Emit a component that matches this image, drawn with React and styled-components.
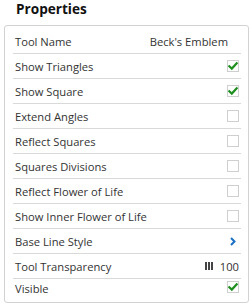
import React from "react";
import styled, { createGlobalStyle } from "styled-components";

const GlobalStyle = createGlobalStyle`
  body {
    margin: 0;
    background: #ffffff;
    font-family: "Open Sans", "Liberation Sans", sans-serif;
    color: #333333;
  }
`;

const rows = [
  { label: "Tool Name", type: "text", value: "Beck's Emblem" },
  { label: "Show Triangles", type: "check", value: true },
  { label: "Show Square", type: "check", value: true },
  { label: "Extend Angles", type: "check", value: false },
  { label: "Reflect Squares", type: "check", value: false },
  { label: "Squares Divisions", type: "check", value: false },
  { label: "Reflect Flower of Life", type: "check", value: false },
  { label: "Show Inner Flower of Life", type: "check", value: false },
  { label: "Base Line Style", type: "link" },
  { label: "Tool Transparency", type: "slider", value: 100 },
  { label: "Visible", type: "check", value: true },
];

const Check = ({ on }) => (
  <Box>
    {on && (
      <svg width="10" height="10" viewBox="0 0 10 10">
        <path
          d="M1.3 5.2 L3.8 7.6 L8.7 2.3"
          fill="none"
          stroke="#1f8f1f"
          strokeWidth="2.2"
          strokeLinecap="square"
        />
      </svg>
    )}
  </Box>
);

const Chevron = () => (
  <svg width="6" height="9" viewBox="0 0 6 9">
    <path d="M1 1 L4.5 4.5 L1 8" fill="none" stroke="#1a6fc4" strokeWidth="2" />
  </svg>
);

const App = () => {
  return (
    <Page>
      <GlobalStyle />
      <Title>Properties</Title>
      <Card>
        {rows.map((r) => (
          <Row key={r.label}>
            <Label>{r.label}</Label>
            {r.type === "text" && <Value $inset>{r.value}</Value>}
            {r.type === "check" && <Check on={r.value} />}
            {r.type === "link" && (
              <Arrow>
                <Chevron />
              </Arrow>
            )}
            {r.type === "slider" && (
              <Slider>
                <Bars>
                  <i />
                  <i />
                  <i />
                </Bars>
                <Value>{r.value}</Value>
              </Slider>
            )}
          </Row>
        ))}
      </Card>
    </Page>
  );
};

export default App;

const Page = styled.div`
  width: 252px;
  height: 308px;
  overflow: hidden;
`;

const Title = styled.h1`
  margin: 0;
  padding: 0 0 0 16px;
  height: 25px;
  font-size: 13.6px;
  line-height: 17px;
  font-weight: 700;
  color: #111111;
`;

const Card = styled.div`
  margin-left: 4px;
  width: 245px;
  box-sizing: border-box;
  border: 1px solid #d2d2d2;
  border-radius: 3px;
  padding: 3px 7px 0 8px;
  background: #ffffff;
`;

const Row = styled.div`
  display: flex;
  align-items: center;
  justify-content: space-between;
  height: 24px;
  border-bottom: 1px solid #d9d9d9;
  padding: 0 2px 0 2px;
  font-size: 11.2px;

  &:last-child {
    border-bottom: none;
    height: 21px;
    align-items: flex-start;
    padding-top: 2px;
  }
`;

const Label = styled.span`
  color: #333333;
  white-space: nowrap;
`;

const Value = styled.span`
  color: #333333;
  padding-right: ${(p) => (p.$inset ? "11px" : "0")};
`;

const Box = styled.span`
  display: flex;
  align-items: center;
  justify-content: center;
  width: 12px;
  height: 12px;
  box-sizing: border-box;
  border: 1px solid #cfcfcf;
  background: #ffffff;
`;

const Arrow = styled.span`
  display: flex;
  align-items: center;
  padding-right: 3px;
`;

const Slider = styled.span`
  display: flex;
  align-items: center;
  gap: 7px;
`;

const Bars = styled.span`
  display: flex;
  gap: 1px;
  i {
    display: block;
    width: 2px;
    height: 8px;
    background: #444444;
  }
`;
